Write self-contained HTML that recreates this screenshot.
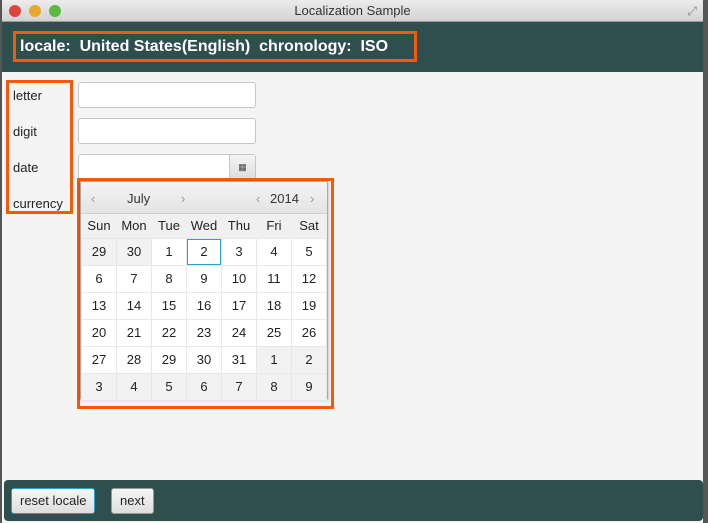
<!DOCTYPE html>
<html><head><meta charset="utf-8"><style>
*{box-sizing:border-box;margin:0;padding:0}
body{width:708px;height:523px;background:#555;font-family:"Liberation Sans",sans-serif;position:relative;overflow:hidden}
.win{position:absolute;left:2px;top:0;width:701px;height:523px;background:#f4f4f4}
.title{position:absolute;left:0;top:0;width:701px;height:22px;background:linear-gradient(#ececec,#d2d2d2);border-bottom:1px solid #999;text-align:center;font-size:13px;line-height:22px;color:#333}
.dot{position:absolute;top:5px;width:12px;height:12px;border-radius:50%}
.hdr{position:absolute;left:0;top:22px;width:701px;height:50px;background:#2f4f4f}
.hbox{position:absolute;left:11px;top:9px;width:404px;height:31px;border:3px solid #f55a0a;color:#fff;font-weight:bold;font-size:16px;line-height:25px;padding-left:4px;white-space:pre}
.lbox{position:absolute;left:4px;top:80px;width:67px;height:134px;border:3px solid #f55a0a}
.lbl{position:absolute;left:11px;font-size:13px;color:#222}
.inp{position:absolute;left:76px;width:178px;height:26px;background:#fff;border:1px solid #c6c6c6;border-radius:3px}
.cbox{position:absolute;left:75px;top:178px;width:257px;height:231px;border:3px solid #f55a0a}
.pop{position:absolute;left:78px;top:181px;width:248px;height:218px;background:#f4f4f4;border:1px solid #aaa;box-shadow:0 1px 3px rgba(0,0,0,.3)}
.ph{height:32px;background:linear-gradient(#f4f4f4,#e4e4e4);border-bottom:1px solid #d0d0d0;position:relative;font-size:13px;color:#333}
.ph span{position:absolute;top:9px}
.ar{color:#999}
table{border-collapse:collapse;position:absolute;left:0;top:32px}
td{width:35px;text-align:center;font-size:13px;color:#222}
tr.wd td{height:24px;background:#f0f0f0}
tr.d td{height:27px;background:#fff;border:1px solid #e8e8e8}
td.o{background:#f2f2f2!important}
td.sel{box-shadow:inset 0 0 0 1px #2aa0d0}
.ftr{position:absolute;left:2px;top:480px;width:699px;height:41px;background:#2f4f4f;border-radius:4px}
.btn{position:absolute;top:8px;height:26px;font-size:13px;line-height:24px;padding:0 8px;background:linear-gradient(#f6f6f6,#dedede);border:1px solid #999;border-radius:3px;color:#222}
</style></head><body>
<div class="win">
<div class="title">Localization Sample
<div class="dot" style="left:7px;background:#e0433e"></div>
<div class="dot" style="left:27px;background:#e5a82c"></div>
<div class="dot" style="left:47px;background:#5cb83f"></div>
<span style="position:absolute;right:6px;top:0;color:#888;font-size:12px">⤢</span>
</div>
<div class="hdr"><div class="hbox">locale:  United States(English)  chronology:  ISO</div></div>
<div class="lbox"></div>
<div class="lbl" style="top:88px">letter</div>
<div class="lbl" style="top:124px">digit</div>
<div class="lbl" style="top:160px">date</div>
<div class="lbl" style="top:196px">currency</div>
<div class="inp" style="top:82px"></div>
<div class="inp" style="top:118px"></div>
<div class="inp" style="top:154px"><div style="position:absolute;right:0;top:0;width:26px;height:24px;background:linear-gradient(#f4f4f4,#ddd);border-left:1px solid #c6c6c6;text-align:center;font-size:9px;line-height:24px;color:#444">▦</div></div>
<div class="cbox"></div>
<div class="pop">
<div class="ph"><span class="ar" style="left:10px">‹</span><span style="left:46px">July</span><span class="ar" style="left:100px">›</span><span class="ar" style="left:175px">‹</span><span style="left:189px">2014</span><span class="ar" style="left:229px">›</span></div>
<table>
<tr class="wd"><td>Sun</td><td>Mon</td><td>Tue</td><td>Wed</td><td>Thu</td><td>Fri</td><td>Sat</td></tr>
<tr class="d"><td class="o">29</td><td class="o">30</td><td>1</td><td class="sel">2</td><td>3</td><td>4</td><td>5</td></tr>
<tr class="d"><td>6</td><td>7</td><td>8</td><td>9</td><td>10</td><td>11</td><td>12</td></tr>
<tr class="d"><td>13</td><td>14</td><td>15</td><td>16</td><td>17</td><td>18</td><td>19</td></tr>
<tr class="d"><td>20</td><td>21</td><td>22</td><td>23</td><td>24</td><td>25</td><td>26</td></tr>
<tr class="d"><td>27</td><td>28</td><td>29</td><td>30</td><td>31</td><td class="o">1</td><td class="o">2</td></tr>
<tr class="d"><td class="o">3</td><td class="o">4</td><td class="o">5</td><td class="o">6</td><td class="o">7</td><td class="o">8</td><td class="o">9</td></tr>
</table>
</div>
<div class="ftr">
<div class="btn" style="left:7px;border-color:#2aa0d0">reset locale</div>
<div class="btn" style="left:107px">next</div>
</div>
</div>
</body></html>
